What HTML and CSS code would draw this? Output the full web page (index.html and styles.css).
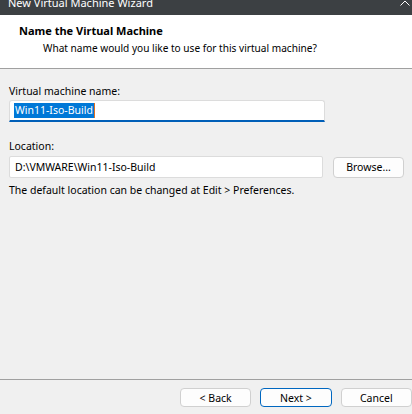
FILE: index.html
```html
<!DOCTYPE html>
<html>
<head>
<meta charset="utf-8">
<link rel="stylesheet" href="styles.css">
</head>
<body>
<div class="window">
  <div class="titlebar">
    <span class="title">New Virtual Machine Wizard</span>
    <svg class="chev" width="10" height="6" viewBox="0 0 10 6"><path d="M0.5 5.5 L5 1 L9.5 5.5" fill="none" stroke="#fff" stroke-width="1"/></svg>
  </div>
  <div class="header">
    <div class="h-title">Name the Virtual Machine</div>
    <div class="h-sub">What name would you like to use for this virtual machine?</div>
  </div>
  <div class="content">
    <label class="lbl">Virtual machine name:</label>
    <div class="field name-field"><span class="sel">Win11-Iso-Build</span><span class="caret"></span></div>
    <label class="lbl loc-lbl">Location:</label>
    <div class="loc-row">
      <div class="field loc-field">D:\VMWARE\Win11-Iso-Build</div>
      <button class="btn browse">Browse...</button>
    </div>
    <div class="hint">The default location can be changed at Edit &gt; Preferences.</div>
  </div>
  <div class="footer">
    <button class="btn">&lt; Back</button>
    <button class="btn primary">Next &gt;</button>
    <button class="btn">Cancel</button>
  </div>
</div>
</body>
</html>
```
FILE: styles.css
```css
* { box-sizing: border-box; }
html, body { margin: 0; padding: 0; }
body {
  width: 412px;
  height: 414px;
  overflow: hidden;
  background: #f0f0f0;
  font-family: "Noto Sans", "Liberation Sans", sans-serif;
  font-size: 10.5px;
  color: #000;
}
.window { display: flex; flex-direction: column; height: 414px; }
.titlebar {
  height: 15px;
  background: #3c4043;
  color: #fff;
  position: relative;
  overflow: hidden;
  flex: none;
}
.title {
  display: block;
  font-size: 11px;
  line-height: 13px;
  margin-top: -4px;
  padding-left: 8px;
}
.chev { position: absolute; right: 2px; top: 0; }
.header {
  background: #fff;
  height: 54px;
  border-bottom: 1px solid #a0a0a0;
  padding: 8px 0 0 19px;
  flex: none;
}
.h-title { font-weight: bold; line-height: 16px; font-size: 11px; }
.h-sub { padding-left: 24px; line-height: 16px; margin-top: 1px; font-size: 10.1px; }
.content { padding: 14px 8px 0 9px; flex: 1; display: flex; flex-direction: column; }
.lbl { display: block; line-height: 16px; }
.field {
  background: #fff;
  border: 1px solid #dcdcdc;
  border-radius: 2px;
  height: 22px;
  display: flex;
  align-items: center;
  padding-left: 4px;
}
.name-field {
  width: 316px;
  margin-top: 1px;
  border-bottom: 2px solid #005fb8;
  border-radius: 3px 3px 0 0;
}
.sel { background: #0078d7; color: #fff; line-height: 15px; padding: 0 1px; }
.caret { width: 1px; height: 15px; background: #e07020; }
.loc-lbl { margin-top: 16px; }
.loc-row { display: flex; align-items: center; margin-top: 2px; }
.loc-field { width: 314px; height: 22px; padding-left: 5px; }
.btn {
  font-family: inherit;
  font-size: 10.5px;
  background: #fdfdfd;
  border: 1px solid #d0d0d0;
  border-radius: 4px;
  height: 19px;
  width: 72px;
  padding: 0;
  color: #000;
}
.browse { margin-left: 10px; height: 21px; width: 71px; }
.hint { margin-top: 4px; line-height: 16px; }
.footer {
  flex: none;
  height: 35px;
  border-top: 1px solid #a0a0a0;
  display: flex;
  gap: 9px;
  padding: 8px 0 0 180px;
}
.footer .btn { width: 72px; height: 19px; }
.primary { border-color: #0067c0; }
```
